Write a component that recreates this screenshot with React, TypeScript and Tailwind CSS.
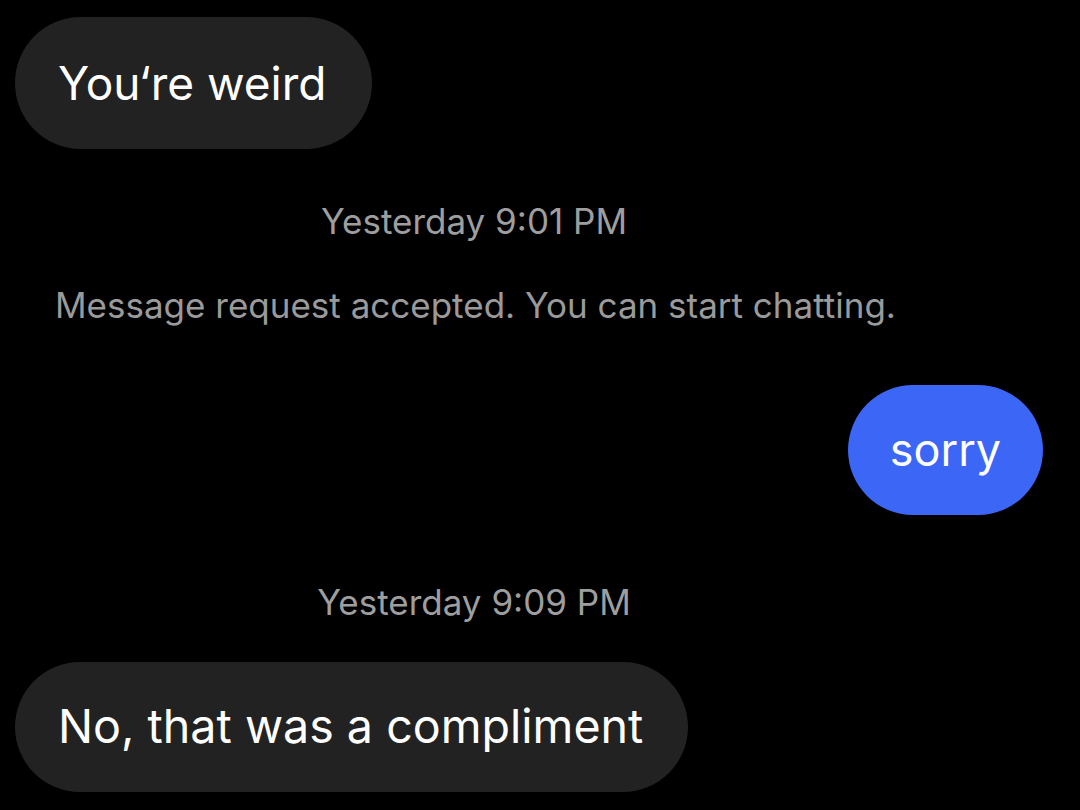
import React from 'react';

const Bubble: React.FC<{ text: string; className: string }> = ({ text, className }) => (
  <div className={`flex items-center rounded-full text-white ${className}`}>{text}</div>
);

const Stamp: React.FC<{ text: string; className: string }> = ({ text, className }) => (
  <div className={`w-[948px] text-center text-[35px] leading-[44px] text-[#9e9e9e] ${className}`}>{text}</div>
);

export default function App() {
  return (
    <div
      className="flex h-[810px] w-[1080px] flex-col overflow-hidden bg-black"
      style={{ fontFamily: 'Inter, Roboto, "Liberation Sans", sans-serif' }}
    >
      <Bubble
        text="You‘re weird"
        className="ml-[15px] mt-[17px] h-[132px] w-[357px] bg-[#222222] pl-[43px] text-[46px]"
      />

      <Stamp text="Yesterday 9:01 PM" className="mt-[50px]" />

      <div className="mt-[40px] pl-[55px] text-[35px] leading-[44px] text-[#9a9a9a]">
        Message request accepted. You can start chatting.
      </div>

      <Bubble
        text="sorry"
        className="mr-[37px] mt-[58px] h-[130px] w-[195px] self-end justify-center bg-[#3c66f5] text-[45px]"
      />

      <Stamp text="Yesterday 9:09 PM" className="mt-[65px]" />

      <Bubble
        text="No, that was a compliment"
        className="ml-[15px] mt-[38px] h-[130px] w-[673px] shrink-0 bg-[#222222] pl-[43px] text-[46.6px]"
      />
    </div>
  );
}
